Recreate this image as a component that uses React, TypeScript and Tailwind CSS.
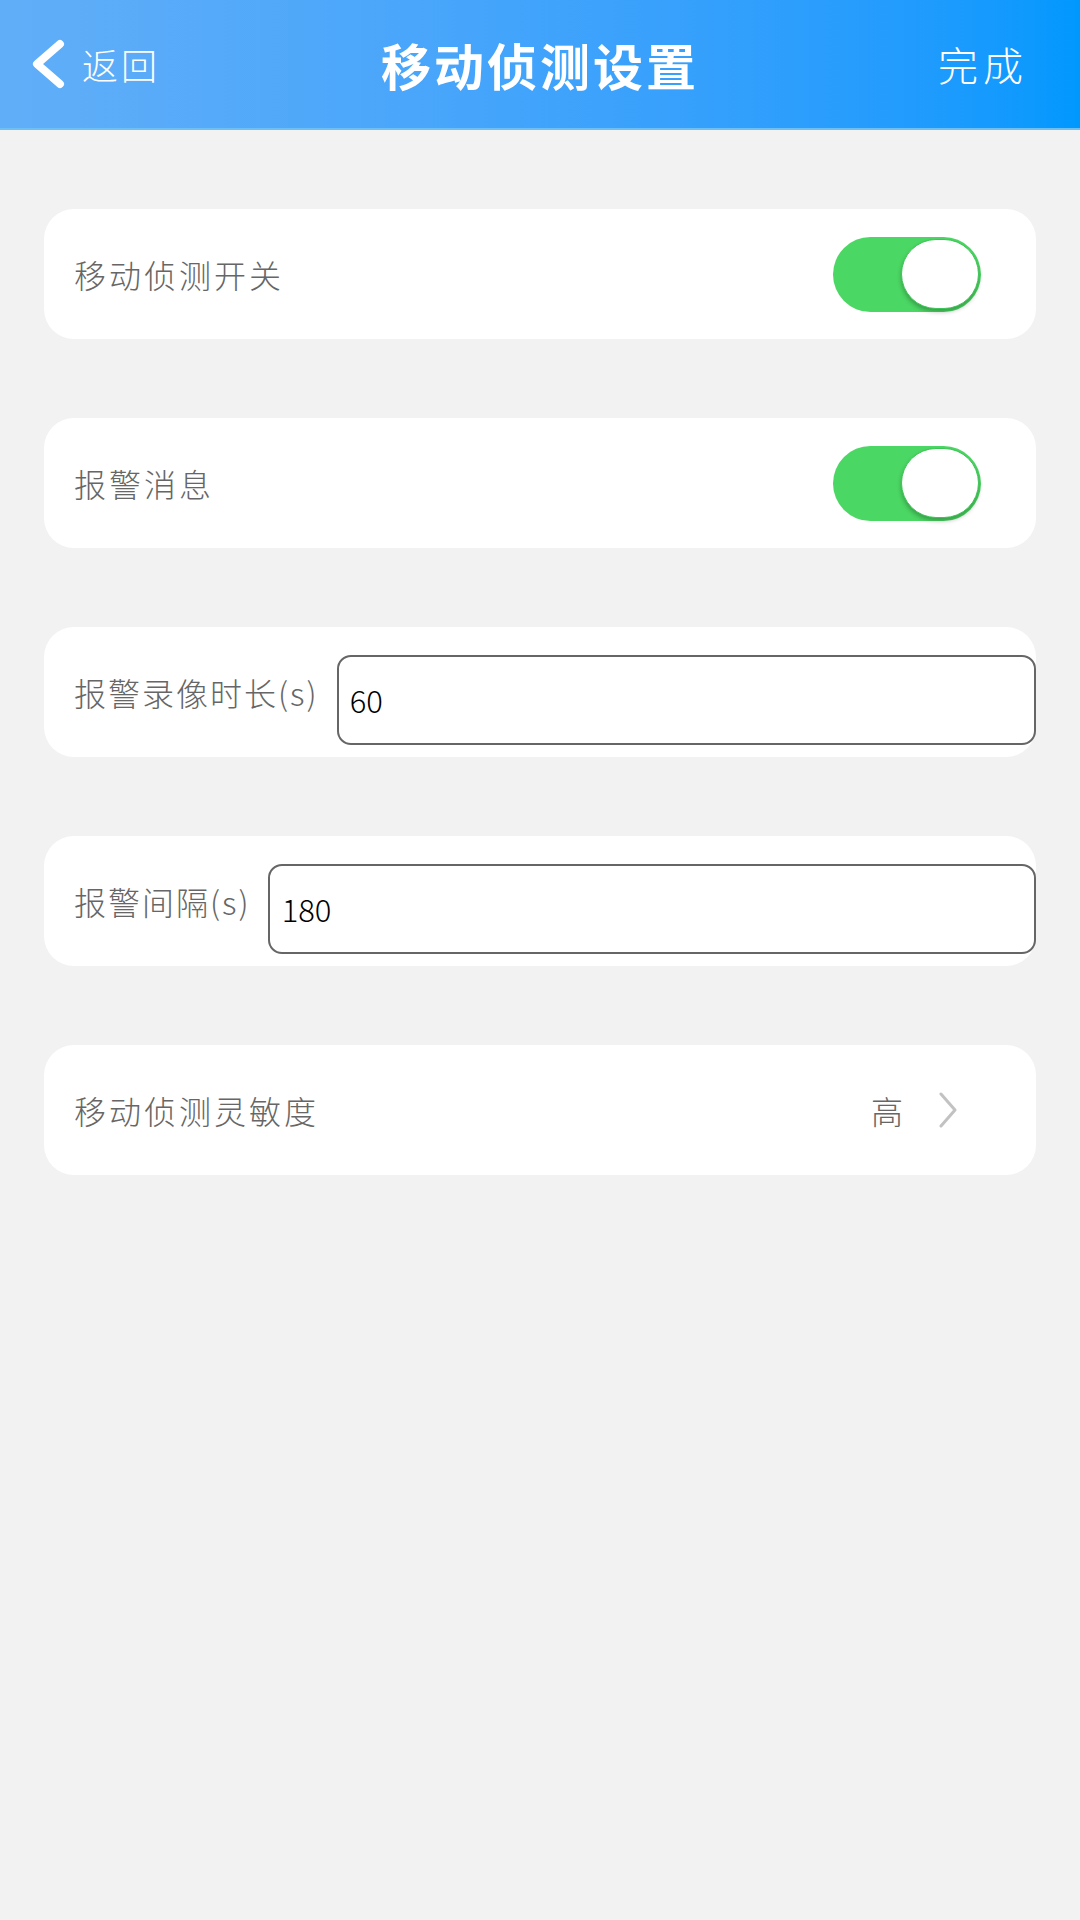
import { useState } from 'react'

function Toggle({ on }: { on: boolean }) {
  return (
    <div
      className={`flex h-[75px] w-[148px] items-center rounded-full px-[2px] ${
        on ? 'justify-end bg-[#4bd763]' : 'justify-start bg-[#e5e5e5]'
      }`}
    >
      <div className="h-[70px] w-[78px] rounded-full border border-[#3fc457] bg-white shadow-[0_3px_4px_rgba(0,0,0,0.25)]" />
    </div>
  )
}

function BackIcon() {
  return (
    <svg width="36" height="50" viewBox="0 0 36 50" fill="none">
      <polyline
        points="30,5 7,25 30,45"
        stroke="white"
        strokeWidth="8"
        strokeLinecap="round"
        strokeLinejoin="round"
      />
    </svg>
  )
}

function ChevronRight() {
  return (
    <svg width="20" height="36" viewBox="0 0 20 36" fill="none">
      <polyline
        points="3,2 17,18 3,34"
        stroke="#c2c2c2"
        strokeWidth="3"
        strokeLinecap="round"
        strokeLinejoin="round"
      />
    </svg>
  )
}

export default function App() {
  const [motion] = useState(true)
  const [alarm] = useState(true)

  return (
    <div className="min-h-screen w-full bg-[#f2f2f2] font-['Noto_Sans_CJK_SC','Noto_Sans',sans-serif]">
      <header className="flex h-[130px] items-center border-b-2 border-[#6cc0f6] bg-gradient-to-r from-[#61aef8] to-[#0098fe] text-white">
        <div className="flex w-[200px] items-center gap-[16px] pl-[30px]">
          <BackIcon />
          <span className="text-[36px] font-light tracking-[3px]">返回</span>
        </div>
        <h1 className="flex-1 text-center text-[50px] font-bold tracking-[3px]">移动侦测设置</h1>
        <div className="flex w-[200px] justify-end pr-[52px]">
          <span className="text-[40px] font-light tracking-[5px]">完成</span>
        </div>
      </header>

      <main className="flex flex-col gap-[79px] px-[44px] pt-[79px] text-[32px] font-light tracking-[3px] text-[#666666]">
        <div className="flex h-[130px] items-center justify-between rounded-[30px] bg-white pl-[30px] pr-[55px]">
          <span>移动侦测开关</span>
          <Toggle on={motion} />
        </div>

        <div className="flex h-[130px] items-center justify-between rounded-[30px] bg-white pl-[30px] pr-[55px]">
          <span>报警消息</span>
          <Toggle on={alarm} />
        </div>

        <div className="flex h-[130px] items-center rounded-[30px] bg-white pl-[30px]">
          <span className="whitespace-nowrap tracking-[2px]">报警录像时长(s)</span>
          <input
            defaultValue="60"
            className="ml-[18px] mt-[15px] h-[90px] min-w-0 flex-1 rounded-[14px] border-2 border-[#666666] bg-white pl-[11px] text-[31px] font-light tracking-normal text-black outline-none"
          />
        </div>

        <div className="flex h-[130px] items-center rounded-[30px] bg-white pl-[30px]">
          <span className="whitespace-nowrap tracking-[2px]">报警间隔(s)</span>
          <input
            defaultValue="180"
            className="ml-[17px] mt-[15px] h-[90px] min-w-0 flex-1 rounded-[14px] border-2 border-[#666666] bg-white pl-[12px] text-[31px] font-light tracking-normal text-black outline-none"
          />
        </div>

        <div className="flex h-[130px] items-center rounded-[30px] bg-white pl-[30px] pr-[78px]">
          <span className="flex-1">移动侦测灵敏度</span>
          <span>高</span>
          <div className="ml-[32px]">
            <ChevronRight />
          </div>
        </div>
      </main>
    </div>
  )
}
